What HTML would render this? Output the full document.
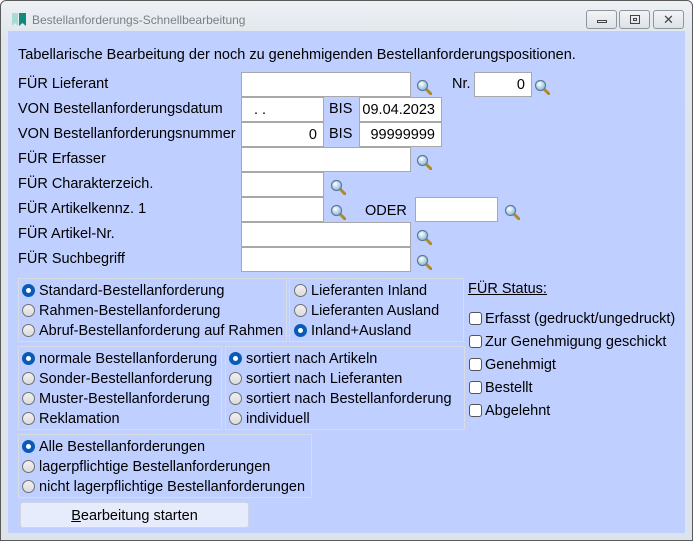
<!DOCTYPE html>
<html><head><meta charset="utf-8"><style>
*{box-sizing:border-box;margin:0;padding:0}
body{width:693px;height:541px;overflow:hidden;background:#fff;font-family:"Liberation Sans",Arial,sans-serif;font-size:14.5px;color:#000;position:relative}
.win{position:absolute;left:0;top:0;width:693px;height:541px;border:1px solid #5a5a5a;border-radius:6px 6px 0 0;background:linear-gradient(#eef1f4,#dfe5ec 40px,#dde3ea)}
.title{position:absolute;left:31px;top:12px;font-size:12px;color:#7a7f86}
.ico{position:absolute;left:11px;top:12px;width:14px;height:13px}
.tb{position:absolute;top:9px;height:19px;border:1px solid #8e959d;border-radius:3px;background:linear-gradient(#f2f4f6,#dde2e8)}
.client{position:absolute;left:8px;top:31px;width:677px;height:502px;background:#bfcfff}
.a{position:absolute;white-space:nowrap}
.in{position:absolute;background:#fff;border:1px solid #a8a8a8;height:25px;text-align:right;padding:4px 6px 0 0}
.mg{position:absolute;width:16px;height:16px}
.grp{position:absolute;border:1px solid #d8dde4}
.r{position:absolute;width:13px;height:13px;border-radius:50%;border:1px solid #707070;background:linear-gradient(#f0f0f0,#dcdcdc)}
.r.on{background:#fff;border:4px solid #0a5bb5}
.cb{position:absolute;width:13px;height:13px;border:1px solid #555;border-radius:3px;background:#fff}
.btn{position:absolute;left:20px;top:502px;width:229px;height:26px;border:1px solid #cfd6e2;border-radius:3px;background:#e6ecfb;text-align:center;padding-top:5px}
</style></head><body>
<div class="win">
<svg class="ico" viewBox="0 0 14 13"><path d="M0 0h6v13l-3-3-3 3z" fill="#a6dcd2"/><path d="M7 0h7v13l-3.5-3-3.5 3z" fill="#0f8a7c"/></svg>
<div class="title">Bestellanforderungs-Schnellbearbeitung</div>
<div class="tb" style="left:585px;width:31px"><div style="position:absolute;left:10px;top:9px;width:10px;height:3px;border:1px solid #444"></div></div>
<div class="tb" style="left:618px;width:31px"><div style="position:absolute;left:10px;top:4px;width:10px;height:9px;border:1px solid #444"></div><div style="position:absolute;left:13px;top:7px;width:4px;height:3px;border:1px solid #444"></div></div>
<div class="tb" style="left:652px;width:31px;font-size:13px;text-align:center;color:#444;line-height:17px">✕</div>
</div>
<div class="client"></div>
<div class="a" style="left:18px;top:47px">Tabellarische Bearbeitung der noch zu genehmigenden Bestellanforderungspositionen.</div>
<div class="a" style="left:18px;top:76px">FÜR Lieferant</div>
<div class="a" style="left:18px;top:101px">VON Bestellanforderungsdatum</div>
<div class="a" style="left:18px;top:126px">VON Bestellanforderungsnummer</div>
<div class="a" style="left:18px;top:151px">FÜR Erfasser</div>
<div class="a" style="left:18px;top:176px">FÜR Charakterzeich.</div>
<div class="a" style="left:18px;top:201px">FÜR Artikelkennz. 1</div>
<div class="a" style="left:18px;top:226px">FÜR Artikel-Nr.</div>
<div class="a" style="left:18px;top:251px">FÜR Suchbegriff</div>

<div class="in" style="left:241px;top:72px;width:170px"></div>
<div class="in" style="left:241px;top:97px;width:83px;text-align:left;padding-left:12px">. .</div>
<div class="a" style="left:329px;top:101px">BIS</div>
<div class="in" style="left:359px;top:97px;width:83px">09.04.2023</div>
<div class="in" style="left:241px;top:122px;width:83px">0</div>
<div class="a" style="left:329px;top:126px">BIS</div>
<div class="in" style="left:359px;top:122px;width:83px">99999999</div>
<div class="in" style="left:241px;top:147px;width:170px"></div>
<div class="in" style="left:241px;top:172px;width:83px"></div>
<div class="in" style="left:241px;top:197px;width:83px"></div>
<div class="a" style="left:365px;top:203px">ODER</div>
<div class="in" style="left:415px;top:197px;width:83px;height:25px"></div>
<div class="in" style="left:241px;top:222px;width:170px"></div>
<div class="in" style="left:241px;top:247px;width:170px"></div>
<div class="a" style="left:452px;top:76px">Nr.</div>
<div class="in" style="left:474px;top:72px;width:58px">0</div>

<svg width="0" height="0" style="position:absolute"><defs><radialGradient id="lg" cx="40%" cy="35%" r="70%"><stop offset="0" stop-color="#fff"/><stop offset="1" stop-color="#7fb2d6"/></radialGradient></defs></svg>
<svg class="mg" style="left:416px;top:79px" viewBox="0 0 16 16"><path d="M10 10l5 5" stroke="#b08a2a" stroke-width="3" stroke-linecap="round"/><circle cx="6.5" cy="6.5" r="5" fill="url(#lg)" stroke="#5a7d99" stroke-width="1.2"/></svg>
<svg class="mg" style="left:534px;top:79px" viewBox="0 0 16 16"><path d="M10 10l5 5" stroke="#b08a2a" stroke-width="3" stroke-linecap="round"/><circle cx="6.5" cy="6.5" r="5" fill="url(#lg)" stroke="#5a7d99" stroke-width="1.2"/></svg>
<svg class="mg" style="left:416px;top:154px" viewBox="0 0 16 16"><path d="M10 10l5 5" stroke="#b08a2a" stroke-width="3" stroke-linecap="round"/><circle cx="6.5" cy="6.5" r="5" fill="url(#lg)" stroke="#5a7d99" stroke-width="1.2"/></svg>
<svg class="mg" style="left:330px;top:179px" viewBox="0 0 16 16"><path d="M10 10l5 5" stroke="#b08a2a" stroke-width="3" stroke-linecap="round"/><circle cx="6.5" cy="6.5" r="5" fill="url(#lg)" stroke="#5a7d99" stroke-width="1.2"/></svg>
<svg class="mg" style="left:330px;top:204px" viewBox="0 0 16 16"><path d="M10 10l5 5" stroke="#b08a2a" stroke-width="3" stroke-linecap="round"/><circle cx="6.5" cy="6.5" r="5" fill="url(#lg)" stroke="#5a7d99" stroke-width="1.2"/></svg>
<svg class="mg" style="left:504px;top:204px" viewBox="0 0 16 16"><path d="M10 10l5 5" stroke="#b08a2a" stroke-width="3" stroke-linecap="round"/><circle cx="6.5" cy="6.5" r="5" fill="url(#lg)" stroke="#5a7d99" stroke-width="1.2"/></svg>
<svg class="mg" style="left:416px;top:229px" viewBox="0 0 16 16"><path d="M10 10l5 5" stroke="#b08a2a" stroke-width="3" stroke-linecap="round"/><circle cx="6.5" cy="6.5" r="5" fill="url(#lg)" stroke="#5a7d99" stroke-width="1.2"/></svg>
<svg class="mg" style="left:416px;top:254px" viewBox="0 0 16 16"><path d="M10 10l5 5" stroke="#b08a2a" stroke-width="3" stroke-linecap="round"/><circle cx="6.5" cy="6.5" r="5" fill="url(#lg)" stroke="#5a7d99" stroke-width="1.2"/></svg>

<div class="grp" style="left:18px;top:278px;width:269px;height:64px"></div>
<div class="grp" style="left:289px;top:278px;width:175px;height:64px"></div>
<div class="grp" style="left:18px;top:346px;width:204px;height:84px"></div>
<div class="grp" style="left:225px;top:346px;width:240px;height:84px"></div>
<div class="grp" style="left:18px;top:434px;width:294px;height:64px"></div>

<div class="r on" style="left:22px;top:284px"></div><div class="a" style="left:39px;top:283px">Standard-Bestellanforderung</div>
<div class="r" style="left:22px;top:304px"></div><div class="a" style="left:39px;top:303px">Rahmen-Bestellanforderung</div>
<div class="r" style="left:22px;top:324px"></div><div class="a" style="left:39px;top:323px">Abruf-Bestellanforderung auf Rahmen</div>
<div class="r" style="left:294px;top:284px"></div><div class="a" style="left:311px;top:283px">Lieferanten Inland</div>
<div class="r" style="left:294px;top:304px"></div><div class="a" style="left:311px;top:303px">Lieferanten Ausland</div>
<div class="r on" style="left:294px;top:324px"></div><div class="a" style="left:311px;top:323px">Inland+Ausland</div>

<div class="r on" style="left:22px;top:352px"></div><div class="a" style="left:39px;top:351px">normale Bestellanforderung</div>
<div class="r" style="left:22px;top:372px"></div><div class="a" style="left:39px;top:371px">Sonder-Bestellanforderung</div>
<div class="r" style="left:22px;top:392px"></div><div class="a" style="left:39px;top:391px">Muster-Bestellanforderung</div>
<div class="r" style="left:22px;top:412px"></div><div class="a" style="left:39px;top:411px">Reklamation</div>
<div class="r on" style="left:229px;top:352px"></div><div class="a" style="left:246px;top:351px">sortiert nach Artikeln</div>
<div class="r" style="left:229px;top:372px"></div><div class="a" style="left:246px;top:371px">sortiert nach Lieferanten</div>
<div class="r" style="left:229px;top:392px"></div><div class="a" style="left:246px;top:391px">sortiert nach Bestellanforderung</div>
<div class="r" style="left:229px;top:412px"></div><div class="a" style="left:246px;top:411px">individuell</div>

<div class="r on" style="left:22px;top:440px"></div><div class="a" style="left:39px;top:439px">Alle Bestellanforderungen</div>
<div class="r" style="left:22px;top:460px"></div><div class="a" style="left:39px;top:459px">lagerpflichtige Bestellanforderungen</div>
<div class="r" style="left:22px;top:480px"></div><div class="a" style="left:39px;top:479px">nicht lagerpflichtige Bestellanforderungen</div>

<div class="a" style="left:468px;top:281px;text-decoration:underline">FÜR Status:</div>
<div class="cb" style="left:469px;top:312px"></div><div class="a" style="left:485px;top:311px">Erfasst (gedruckt/ungedruckt)</div>
<div class="cb" style="left:469px;top:335px"></div><div class="a" style="left:485px;top:334px">Zur Genehmigung geschickt</div>
<div class="cb" style="left:469px;top:358px"></div><div class="a" style="left:485px;top:357px">Genehmigt</div>
<div class="cb" style="left:469px;top:381px"></div><div class="a" style="left:485px;top:380px">Bestellt</div>
<div class="cb" style="left:469px;top:404px"></div><div class="a" style="left:485px;top:403px">Abgelehnt</div>

<div class="btn"><u>B</u>earbeitung starten</div>
</body></html>
